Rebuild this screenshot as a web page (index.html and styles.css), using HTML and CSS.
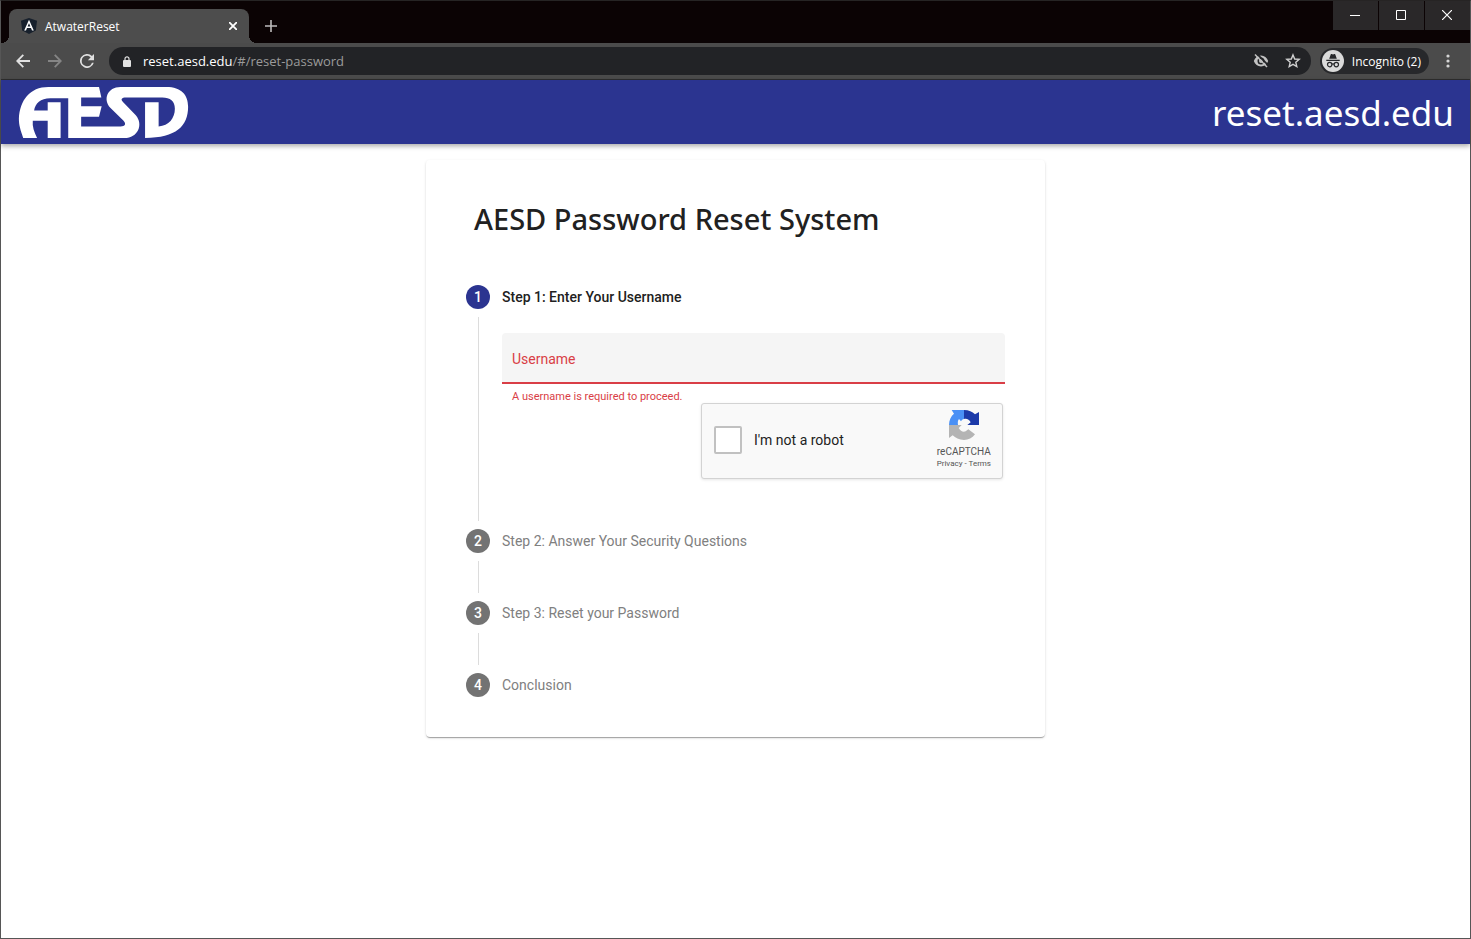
FILE: index.html
```html
<!DOCTYPE html>
<html lang="en">
<head>
<meta charset="utf-8">
<title>AtwaterReset</title>
<link rel="stylesheet" href="styles.css">
</head>
<body>
<div class="window">
  <div class="tabstrip">
    <div class="tab">
      <svg class="favicon" viewBox="0 0 16 16" width="16" height="16" aria-hidden="true"><path fill="#17202c" d="M8 0l8 2.800-1.200 9.700L8 16l-6.800-3.500L0 2.800z"/><path fill="#fff" fill-rule="evenodd" d="M8 1.800L3.200 12.500H5l1-2.400h4l1 2.400h1.800zM8 5.200l1.400 3.400H6.600z"/></svg>
      <span class="tab-title">AtwaterReset</span>
      <button class="tab-close" aria-label="Close tab"><svg viewBox="0 0 8 8" width="8" height="8"><path d="M0 0l8 8M8 0L0 8" stroke="#fff" stroke-width="1.800"/></svg></button>
    </div>
    <button class="new-tab" aria-label="New tab"><svg viewBox="0 0 12 12" width="12" height="12"><path d="M6 0v12M0 6h12" stroke="#bdbcbc" stroke-width="1.600"/></svg></button>
    <div class="win-controls">
      <button aria-label="Minimize"><svg viewBox="0 0 10 10" width="10" height="10"><path d="M0 5.500h10" stroke="#fff"/></svg></button>
      <button aria-label="Maximize"><svg viewBox="0 0 10 10" width="10" height="10"><path d="M.5.5h9v9h-9z" fill="none" stroke="#fff"/></svg></button>
      <button aria-label="Close"><svg viewBox="0 0 10 10" width="10" height="10"><path d="M0 0l10 10M10 0L0 10" stroke="#fff" stroke-width="1.200"/></svg></button>
    </div>
  </div>
  <div class="toolbar">
    <button class="nav" aria-label="Back"><svg viewBox="0 0 14 14" width="14" height="14"><path d="M14 7H1.500M7.300.8L1.200 7l6.100 6.200" fill="none" stroke="#e0e0e0" stroke-width="1.800"/></svg></button>
    <button class="nav" aria-label="Forward"><svg viewBox="0 0 14 14" width="14" height="14"><path d="M0 7h12.500M6.700.8L12.800 7l-6.100 6.200" fill="none" stroke="#858585" stroke-width="1.800"/></svg></button>
    <button class="nav" aria-label="Reload"><svg viewBox="4 4 16 16" width="14" height="14"><path fill="#e0e0e0" d="M17.650 6.350A8 8 0 1 0 19.730 14h-2.080A6 6 0 1 1 12 6c1.660 0 3.140.69 4.220 1.780L13 11h7V4z"/></svg></button>
    <div class="omnibox">
      <svg viewBox="0 0 8 11" width="8" height="11" aria-hidden="true"><path d="M2 5V2.800a2 2 0 0 1 4 0V5" fill="none" stroke="#e2e2e2" stroke-width="1.200"/><rect y="4" width="8" height="7" rx="1" fill="#e2e2e2"/></svg>
      <span class="url"><span class="host">reset.aesd.edu</span>/#/reset-password</span>
      <button aria-label="Third-party cookies blocked"><svg viewBox="0 0 16 14" width="16" height="14"><path fill="#c2c2c2" fill-rule="evenodd" d="M8 1.500c3.300 0 6 2.100 7.200 5.500C14 10.400 11.300 12.500 8 12.500S2 10.400.8 7C2 3.600 4.700 1.500 8 1.500zm0 2a3.500 3.500 0 1 0 0 7 3.500 3.500 0 0 0 0-7zM8 5a2 2 0 1 1 0 4 2 2 0 0 1 0-4z"/><path d="M3.400-.6l12 12" stroke="#222326" stroke-width="1.800"/><path d="M2 .6l12 12.400" stroke="#c2c2c2" stroke-width="1.500"/></svg></button>
      <button aria-label="Bookmark this tab"><svg viewBox="0 0 16 16" width="16" height="16"><path fill="none" stroke="#d0d0d0" stroke-width="1.400" d="M8 1.900l1.700 4.100 4.500.4-3.400 2.900 1 4.300L8 11.300l-3.800 2.300 1-4.300-3.400-2.900 4.500-.4z"/></svg></button>
    </div>
    <button class="incognito">
      <svg viewBox="0 0 22 22" width="22" height="22" aria-hidden="true"><circle cx="11" cy="11" r="11" fill="#dadada"/><path fill="#27282b" d="M7.200 8.800l1.500-4.300c.2-.5.600-.6 1-.4l1.300.4 1.300-.4c.5-.2.900 0 1 .4l1.500 4.300zM4.300 9.800h13.400v1.200H4.300z"/><g fill="none" stroke="#27282b" stroke-width="1.200"><circle cx="7.700" cy="14.600" r="2.200"/><circle cx="14.300" cy="14.600" r="2.200"/><path d="M9.900 14.300q1.100-.7 2.200 0"/></g></svg>
      <span>Incognito (2)</span>
    </button>
    <button class="menu" aria-label="Menu"><svg viewBox="0 0 4 14" width="4" height="14"><g fill="#d6d6d6"><circle cx="2" cy="2" r="1.600"/><circle cx="2" cy="7" r="1.600"/><circle cx="2" cy="12" r="1.600"/></g></svg></button>
  </div>
  <header class="site-header">
    <svg class="logo" viewBox="54 32 513 154" width="171" height="51" role="img" aria-label="AESD"><path fill="#fff" fill-rule="evenodd" d="M68 186C60 162 55 148 55 128 58 72 88 32 144 32H297L304 64H243V90H305L297 122H243V151H362C376 151 380 144 371 134L331 95C308 70 322 32 362 32H500C546 32 566 56 566 92 566 150 530 186 436 186V78H477V151C508 150 526 126 526 98 526 75 512 64 488 64H374C363 66 363 71 370 78L408 117C432 145 414 186 374 186H204V66H150C120 66 104 82 101 103H142V78H181V186H142V134H97C95 152 101 168 110 186Z"/></svg>
    <span class="site-name">reset.aesd.edu</span>
  </header>
  <main class="content">
    <section class="card">
      <h1>AESD Password Reset System</h1>
      <ol class="stepper">
        <li class="step active">
          <div class="marker"><span class="num">1</span></div>
          <div class="body">
            <h2>Step 1: Enter Your Username</h2>
            <form class="form">
              <input class="field" type="text" aria-label="Username" placeholder="Username">
              <p class="error">A username is required to proceed.</p>
              <div class="captcha">
                <input type="checkbox" id="robot">
                <label for="robot">I'm not a robot</label>
                <div class="brand">
                  <svg viewBox="0 0 90 90" width="30" height="30" aria-hidden="true"><path fill="#4a90f5" d="M8 0H45V27C41 28 38 30 36 34L30 27C26 32 26 38 27 45H0C0 30 6 18 15 11Z"/><path fill="#1c3aa9" d="M45 0C60 0 70 5 78 13L90 6V45H55L65 37C61 29 54 25 45 27Z"/><path fill="#b4b4b4" d="M0 45H38L29 54C34 63 42 67 50 64L58 58 78 73C70 84 58 90 45 90 30 90 19 84 11 76L0 84Z"/></svg>
                  <span class="brand-name">reCAPTCHA</span>
                  <span class="links"><a href="#privacy">Privacy</a> - <a href="#terms">Terms</a></span>
                </div>
              </div>
            </form>
          </div>
        </li>
        <li class="step"><div class="marker"><span class="num">2</span></div><div class="body"><h2>Step 2: Answer Your Security Questions</h2></div></li>
        <li class="step"><div class="marker"><span class="num">3</span></div><div class="body"><h2>Step 3: Reset your Password</h2></div></li>
        <li class="step"><div class="marker"><span class="num">4</span></div><div class="body"><h2>Conclusion</h2></div></li>
      </ol>
    </section>
  </main>
</div>
</body>
</html>
```
FILE: styles.css
```css
* { box-sizing: border-box; }
body { margin: 0; background: #fff; font-family: Roboto, "Open Sans", sans-serif; }
button { display: flex; align-items: center; justify-content: center; padding: 0; border: 0; background: none; color: inherit; font: inherit; }
svg { flex: none; }
.window { display: flex; flex-direction: column; min-height: 100vh; border: 1px solid #565656; border-top-color: #262424; }

/* Browser frame */
.tabstrip { display: flex; align-items: flex-start; height: 42px; padding-left: 8px; background: #0b0304; color: #fff; font: 12px "Open Sans", sans-serif; }
.tab { position: relative; display: flex; align-items: center; width: 240px; height: 34px; margin-top: 8px; padding: 0 12px; gap: 8px; border-radius: 8px 8px 0 0; background: #4d4d4d; }
.tab::before, .tab::after { content: ""; position: absolute; bottom: 0; width: 8px; height: 8px; }
.tab::before { right: 100%; background: radial-gradient(circle at 0 0, transparent 8px, #4d4d4d 8px); }
.tab::after { left: 100%; background: radial-gradient(circle at 100% 0, transparent 8px, #4d4d4d 8px); }
.tab-title { flex: 1; }
.new-tab { width: 28px; height: 28px; margin: 11px 0 0 8px; }
.win-controls { display: flex; gap: 1px; margin-left: auto; }
.win-controls button { width: 45px; height: 29px; padding: 0 2px 2px 0; background: #2a2829; }
.toolbar { display: flex; align-items: center; height: 37px; padding: 0 11px 0 6px; border-bottom: 1px solid #2e2e2e; background: #4b4b4b; color: #fff; font: 12px "Open Sans", sans-serif; }
.nav { width: 32px; height: 28px; }
.omnibox { display: flex; flex: 1; align-items: center; height: 28px; margin-left: 6px; padding: 0 10px 0 14px; border-radius: 14px; background: #222326; }
.omnibox button { width: 16px; height: 16px; margin-left: 16px; }
.url { flex: 1; margin-left: 12px; color: #9b9b9b; font-size: 13px; }
.host { color: #fff; }
.incognito { height: 26px; margin-left: 9px; padding: 0 8px 0 2px; gap: 8px; border-radius: 13px; background: #27282b; }
.menu { width: 22px; height: 28px; margin-left: 8px; }

/* Site */
.site-header { position: relative; display: flex; align-items: center; justify-content: space-between; height: 64px; padding: 0 16px 0 17px; background: #2b3490; box-shadow: 0 2px 5px rgba(0, 0, 0, .35); }
.site-name { color: #fff; font: 35px "Noto Sans", sans-serif; }
.content { flex: 1; padding: 16px; }
.card { max-width: 619px; margin: 0 auto; padding: 16px; border-radius: 4px; color: #212121; box-shadow: 0 2px 1px -1px rgba(0, 0, 0, .2), 0 1px 1px rgba(0, 0, 0, .14), 0 1px 3px rgba(0, 0, 0, .12); }
h1 { margin: 24px 32px 36px; font: 500 29px/38px "Noto Sans", sans-serif; }
.stepper { margin: 0; padding: 11px 24px 24px; list-style: none; }
.step { display: grid; grid-template-columns: 24px 1fr; gap: 12px; min-height: 72px; }
.step:last-child { min-height: 24px; }
.step.active { min-height: 244px; }
.marker { display: flex; flex-direction: column; align-items: center; gap: 8px; padding-bottom: 8px; }
.step:not(:last-child) .marker::after { content: ""; flex: 1; width: 1px; margin-left: 1px; background: #dcdcdc; }
.step:last-child .marker { padding: 0; }
.num { width: 24px; height: 24px; border-radius: 50%; background: #737373; color: #fff; font-size: 14px; font-weight: 500; line-height: 24px; text-align: center; }
.active .num { background: #2b3490; }
h2 { margin: 0; color: #808080; font-size: 14px; font-weight: 400; line-height: 24px; }
.active h2 { color: #212121; font-weight: 500; }
.form { display: flex; flex-direction: column; margin-top: 24px; }
.field { width: 100%; height: 51px; padding: 2px 10px 0; border: 0; border-bottom: 2px solid #d93e46; border-radius: 4px 4px 0 0; background: #f5f5f5; font: 14px Roboto, sans-serif; }
.field::placeholder { color: #d93e46; opacity: 1; }
.error { margin: 6px 10px 0; color: #d93e46; font-size: 11px; line-height: 13px; }
.captcha { display: flex; align-items: center; align-self: flex-end; width: 302px; height: 76px; margin-right: 2px; padding: 0 11px 2px 12px; border: 1px solid #d3d3d3; border-radius: 3px; background: #f9f9f9; box-shadow: 0 1px 3px rgba(0, 0, 0, .1); }
.captcha input { width: 28px; height: 28px; margin: 0 12px 0 0; border: 2px solid #c1c1c1; border-radius: 2px; background: #fff; appearance: none; }
.captcha label { flex: 1; color: #222; font-size: 14px; }
.brand { display: flex; flex-direction: column; align-items: center; color: #555; }
.brand-name { margin-top: 6px; font-size: 10px; line-height: 12px; }
.links { font-size: 8px; line-height: 12px; }
.links a { color: inherit; text-decoration: none; }
```
